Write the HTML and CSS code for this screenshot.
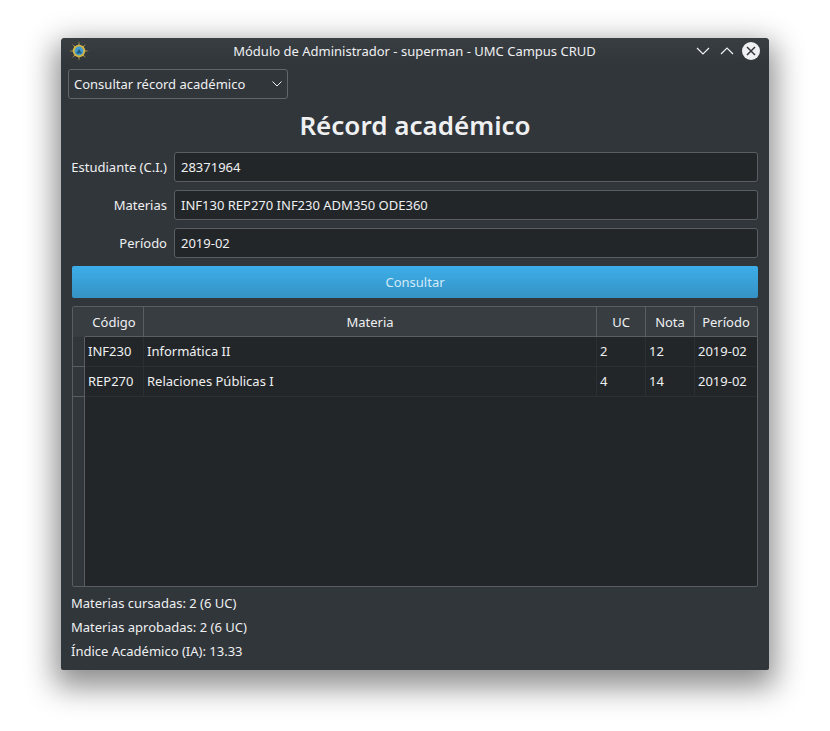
FILE: index.html
```html
<!DOCTYPE html>
<html lang="es">
<head>
    <meta charset="UTF-8">
    <title>UMC Campus CRUD</title>
    <link rel="stylesheet" href="styles.css">
</head>
<body>

    <div class="window">
        <div class="titlebar">
            <svg class="app-icon" width="20" height="20" viewBox="0 0 20 20">
                <path d="M10 0 L11 6 L10 7 L9 6 Z M10 20 L9 14 L10 13 L11 14 Z M0 10 L6 9 L7 10 L6 11 Z M20 10 L14 11 L13 10 L14 9 Z M3 3 L7.5 6.5 L6.5 7.5 Z M17 3 L13.5 7.5 L12.5 6.5 Z M3 17 L6.5 12.5 L7.5 13.5 Z M17 17 L12.5 13.5 L13.5 12.5 Z" fill="#b8a24e"/>
                <circle cx="10" cy="10" r="6.2" fill="#d3b545"/>
                <circle cx="10" cy="10" r="4.4" fill="#3f9bd0"/>
                <path d="M7 12.5 L10 8 L13 12.5 Z" fill="#1d5c78"/>
            </svg>
            <span class="window-title">Módulo de Administrador - superman - UMC Campus CRUD</span>
            <div class="window-buttons">
                <svg width="14" height="14" viewBox="0 0 14 14"><path d="M1 4 L7 10 L13 4" class="chev"/></svg>
                <svg width="14" height="14" viewBox="0 0 14 14"><path d="M1 10 L7 4 L13 10" class="chev"/></svg>
                <svg class="close" width="18" height="18" viewBox="0 0 18 18">
                    <circle cx="9" cy="9" r="9" fill="#eff0f1"/>
                    <path d="M5 5 L13 13 M13 5 L5 13" stroke="#31363b" stroke-width="1.5" fill="none"/>
                </svg>
            </div>
        </div>

        <div class="content">
            <div class="combo">
                <span>Consultar récord académico</span>
                <svg width="10" height="6" viewBox="0 0 10 6"><path d="M0.5 0.5 L5 5 L9.5 0.5" fill="none" stroke="#eff0f1" stroke-width="1"/></svg>
            </div>

            <h1>Récord académico</h1>

            <div class="form-row">
                <label>Estudiante (C.I.)</label>
                <div class="field">28371964</div>
            </div>
            <div class="form-row">
                <label>Materias</label>
                <div class="field">INF130 REP270 INF230 ADM350 ODE360</div>
            </div>
            <div class="form-row">
                <label>Período</label>
                <div class="field">2019-02</div>
            </div>

            <div class="button">Consultar</div>

            <div class="table">
                <div class="corner"></div>
                <div class="head">Código</div>
                <div class="head">Materia</div>
                <div class="head">UC</div>
                <div class="head">Nota</div>
                <div class="head last">Período</div>

                <div class="row-head"></div>
                <div class="cell">INF230</div>
                <div class="cell">Informática II</div>
                <div class="cell">2</div>
                <div class="cell">12</div>
                <div class="cell last">2019-02</div>

                <div class="row-head"></div>
                <div class="cell">REP270</div>
                <div class="cell">Relaciones Públicas I</div>
                <div class="cell">4</div>
                <div class="cell">14</div>
                <div class="cell last">2019-02</div>

                <div class="row-head fill"></div>
                <div class="empty"></div>
            </div>

            <div class="summary">
                <p>Materias cursadas: 2 (6 UC)</p>
                <p>Materias aprobadas: 2 (6 UC)</p>
                <p>Índice Académico (IA): 13.33</p>
            </div>
        </div>
    </div>

</body>
</html>
```

FILE: styles.css
```css
/* Basic Reset */
* {
    margin: 0;
    padding: 0;
    box-sizing: border-box;
}

body {
    font-family: 'Noto Sans', sans-serif;
    font-size: 13px;
    background: #fff;
    color: #eff0f1;
    padding: 38px 0 0 61px;
    height: 731px;
    overflow: hidden;
}

/* Main window */
.window {
    width: 708px;
    height: 632px;
    background: #31363b;
    border-radius: 4px 4px 2px 2px;
    box-shadow: 0 11px 30px 6px rgba(0, 0, 0, 0.45);
}

.titlebar {
    height: 26px;
    display: grid;
    grid-template-columns: 1fr auto 1fr;
    align-items: center;
    padding: 0 9px 0 8px;
    border-radius: 4px 4px 0 0;
    background: linear-gradient(#393e43, #31363b);
}

.app-icon {
    display: block;
}

.window-title {
    white-space: nowrap;
}

.window-buttons {
    display: flex;
    align-items: center;
    justify-content: flex-end;
    gap: 10px;
}

.close {
    margin-left: -2px;
}

.chev {
    fill: none;
    stroke: #eff0f1;
    stroke-width: 1.2;
}

.content {
    padding: 5px 11px 0 7px;
}

.combo {
    width: 220px;
    height: 30px;
    border: 1px solid #62666b;
    border-radius: 3px;
    background: #31363b;
    display: flex;
    align-items: center;
    justify-content: space-between;
    padding: 0 5px 0 5px;
}

h1 {
    font-size: 26px;
    font-weight: 600;
    line-height: 37px;
    height: 37px;
    margin: 8px 0 8px 4px;
    text-align: center;
}

.form-row {
    display: flex;
    align-items: center;
    margin-bottom: 8px;
}

.form-row label {
    width: 99px;
    text-align: right;
    margin-right: 7px;
    white-space: nowrap;
}

.field {
    flex: 1;
    height: 30px;
    line-height: 28px;
    background: #232629;
    border: 1px solid #5a5e63;
    border-radius: 3px;
    padding: 0 6px;
}

.button {
    margin-left: 4px;
    height: 32px;
    line-height: 32px;
    text-align: center;
    color: #d3eaf8;
    border-radius: 2px;
    background: linear-gradient(#3daee9, #3592c4);
}

/* Results table */
.table {
    margin: 8px 0 0 4px;
    height: 281px;
    border: 1px solid #5a5e63;
    border-radius: 2px;
    display: grid;
    grid-template-columns: 12px 59px 453px 49px 49px 62px;
    grid-template-rows: 30px 30px 30px 1fr;
    background: #232629;
}

.corner,
.head,
.row-head {
    background: #383d42;
}

.head {
    display: flex;
    align-items: center;
    justify-content: center;
    border-right: 1px solid #5a5e63;
    border-bottom: 1px solid #5a5e63;
}

.head.last {
    border-right: none;
}

.corner {
    border-bottom: 1px solid #383d42;
}

.row-head {
    background: #31363b;
    border-right: 1px solid #5a5e63;
    border-bottom: 1px solid #5a5e63;
}

.row-head.fill {
    border-bottom: none;
}

.cell {
    display: flex;
    align-items: center;
    padding: 0 0 2px 3px;
    border-right: 1px solid #2c3034;
    border-bottom: 1px solid #2c3034;
}

.cell.last {
    border-right: none;
}

.empty {
    grid-column: 2 / 7;
}

.summary {
    margin: 4px 0 0 3px;
}

.summary p {
    line-height: 24px;
}
```
